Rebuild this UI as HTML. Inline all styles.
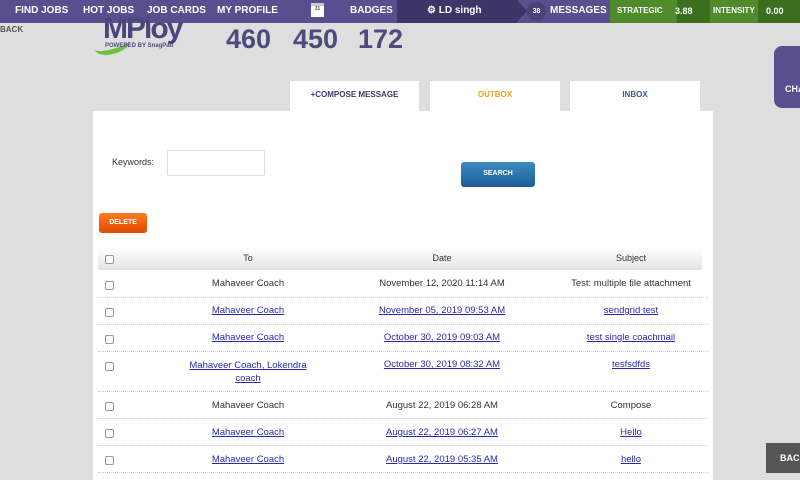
<!DOCTYPE html>
<html><head><meta charset="utf-8"><style>
*{margin:0;padding:0;box-sizing:border-box}
body{width:800px;height:480px;overflow:hidden;background:#dedede;font-family:"Liberation Sans",sans-serif;position:relative}
.nav{position:absolute;left:0;top:0;width:800px;height:23px;background:#5a4f8e;color:#fff;font-weight:bold;font-size:10px}
.nav span{position:absolute;top:5px}
.user{position:absolute;left:397px;top:0;width:120px;height:23px;background:#3d3567}
.user:after{content:"";position:absolute;right:-10px;top:0;border-left:10px solid #3d3567;border-top:11.5px solid transparent;border-bottom:11.5px solid transparent}
.green{position:absolute;left:610px;top:0;width:190px;height:23px;background:#4f8a2b}
.dk{position:absolute;top:0;height:23px;background:#3b6f1e}
.abs{position:absolute}
.num{position:absolute;top:24px;font-size:27px;font-weight:bold;color:#4f4a7e}
.tab{position:absolute;top:81px;height:30px;background:#fff;font-size:8px;font-weight:bold;text-align:center;line-height:28px}
.panel{position:absolute;left:93px;top:111px;width:620px;height:369px;background:#fff}
.th{position:absolute;left:5px;top:136px;width:604px;height:23px;background:linear-gradient(#fff,#e4e4e4);font-size:9px;color:#333}
.row{position:absolute;left:5px;width:610px;border-bottom:1px dotted #ccc;font-size:9.5px;color:#333}
.row div,.th div{position:absolute;text-align:center}
.c1{left:85px;width:130px}.c2{left:264px;width:160px}.c3{left:463px;width:140px}
a{color:#2a2ab0;text-decoration:underline}
.cb{position:absolute;left:7px;width:9px;height:9px;border:1px solid #999;border-radius:2px;background:#fff}
</style></head><body>
<div class="nav">
<div class="user"></div>
<div class="green"><div class="dk" style="left:67px;width:33px"></div><div class="dk" style="left:148px;width:42px"></div></div>
<span style="left:15px">FIND JOBS</span><span style="left:83px">HOT JOBS</span><span style="left:147px">JOB CARDS</span><span style="left:217px">MY PROFILE</span>
<div class="abs" style="left:311px;top:3px;width:13px;height:14px;background:#fff;border-top:3px solid #ccc;font-size:5px;color:#555;text-align:center">31</div>
<span style="left:350px">BADGES</span>
<span style="left:427px">⚙ LD singh</span>
<div class="abs" style="left:527px;top:2px;width:19px;height:19px;border-radius:50%;background:#4a4278;font-size:7px;text-align:center;line-height:19px">38</div>
<span style="left:550px">MESSAGES</span>
<span style="left:617px;font-size:8px;top:6px">STRATEGIC</span><span style="left:675px;font-size:9px;top:6px">3.88</span>
<span style="left:713px;font-size:8px;top:6px">INTENSITY</span><span style="left:766px;font-size:9px;top:6px">0.00</span>
</div>
<div class="abs" style="left:0;top:25px;font-size:8px;font-weight:bold;color:#555">BACK</div>
<div class="abs" style="left:94px;top:36px;width:36px;height:18px;border-radius:50%;border-bottom:5px solid #6ec23e;transform:rotate(-15deg)"></div>
<div class="abs" style="left:103px;top:12px;font-size:30px;font-weight:bold;color:#4a457a;letter-spacing:-2px">MPloy</div>
<div class="abs" style="left:105px;top:43px;font-size:6px;color:#4f4a7e;font-weight:bold">POWERED BY SnagPad</div>
<div class="num" style="left:226px">460</div><div class="num" style="left:293px">450</div><div class="num" style="left:358px">172</div>
<div class="abs" style="left:774px;top:46px;width:40px;height:62px;background:#5a4f8e;border-radius:8px;color:#fff;font-weight:bold;font-size:9px;padding:38px 0 0 11px">CHA</div>
<div class="abs" style="left:766px;top:443px;width:40px;height:30px;background:#555;color:#fff;font-weight:bold;font-size:9px;padding:10px 0 0 14px">BACK</div>
<div class="tab" style="left:290px;width:129px;color:#3a3a6a">+COMPOSE MESSAGE</div>
<div class="tab" style="left:430px;width:130px;color:#e8a020">OUTBOX</div>
<div class="tab" style="left:570px;width:130px;color:#3a5a8a">INBOX</div>
<div class="panel">
<div class="abs" style="left:19px;top:46px;font-size:9px;color:#333">Keywords:</div>
<div class="abs" style="left:74px;top:39px;width:98px;height:26px;border:1px solid #ddd;border-radius:2px"></div>
<div class="abs" style="left:368px;top:51px;width:74px;height:25px;background:linear-gradient(#3d8bc4,#1d5c95);border-radius:3px;color:#fff;font-size:7px;font-weight:bold;text-align:center;line-height:24px">SEARCH</div>
<div class="abs" style="left:6px;top:102px;width:48px;height:20px;background:linear-gradient(#ff7a20,#e04a05);border-radius:3px;color:#fff;font-size:7px;font-weight:bold;text-align:center;line-height:20px">DELETE</div>
<div class="th"><span class="cb" style="top:8px"></span><div class="c1" style="top:6px">To</div><div class="c2" style="top:6px">Date</div><div class="c3" style="top:6px">Subject</div></div>
<div class="row" style="top:160px;height:27px"><span class="cb" style="top:10px"></span><div class="c1" style="top:7px">Mahaveer Coach</div><div class="c2" style="top:7px">November 12, 2020 11:14 AM</div><div class="c3" style="top:7px;left:458px;width:150px">Test: multiple file attachment</div></div>
<div class="row" style="top:187px;height:27px"><span class="cb" style="top:10px"></span><div class="c1" style="top:7px"><a>Mahaveer Coach</a></div><div class="c2" style="top:7px"><a>November 05, 2019 09:53 AM</a></div><div class="c3" style="top:7px"><a>sendgrid test</a></div></div>
<div class="row" style="top:214px;height:27px"><span class="cb" style="top:10px"></span><div class="c1" style="top:7px"><a>Mahaveer Coach</a></div><div class="c2" style="top:7px"><a>October 30, 2019 09:03 AM</a></div><div class="c3" style="top:7px"><a>test single coachmail</a></div></div>
<div class="row" style="top:241px;height:40px"><span class="cb" style="top:10px"></span><div class="c1" style="top:7px;line-height:13px"><a>Mahaveer Coach, Lokendra coach</a></div><div class="c2" style="top:7px"><a>October 30, 2019 08:32 AM</a></div><div class="c3" style="top:7px"><a>tesfsdfds</a></div></div>
<div class="row" style="top:281px;height:27px"><span class="cb" style="top:10px"></span><div class="c1" style="top:8px">Mahaveer Coach</div><div class="c2" style="top:8px">August 22, 2019 06:28 AM</div><div class="c3" style="top:8px">Compose</div></div>
<div class="row" style="top:308px;height:27px"><span class="cb" style="top:10px"></span><div class="c1" style="top:8px"><a>Mahaveer Coach</a></div><div class="c2" style="top:8px"><a>August 22, 2019 06:27 AM</a></div><div class="c3" style="top:8px"><a>Hello</a></div></div>
<div class="row" style="top:335px;height:27px"><span class="cb" style="top:10px"></span><div class="c1" style="top:8px"><a>Mahaveer Coach</a></div><div class="c2" style="top:8px"><a>August 22, 2019 05:35 AM</a></div><div class="c3" style="top:8px"><a>hello</a></div></div>
</div>
</body></html>
